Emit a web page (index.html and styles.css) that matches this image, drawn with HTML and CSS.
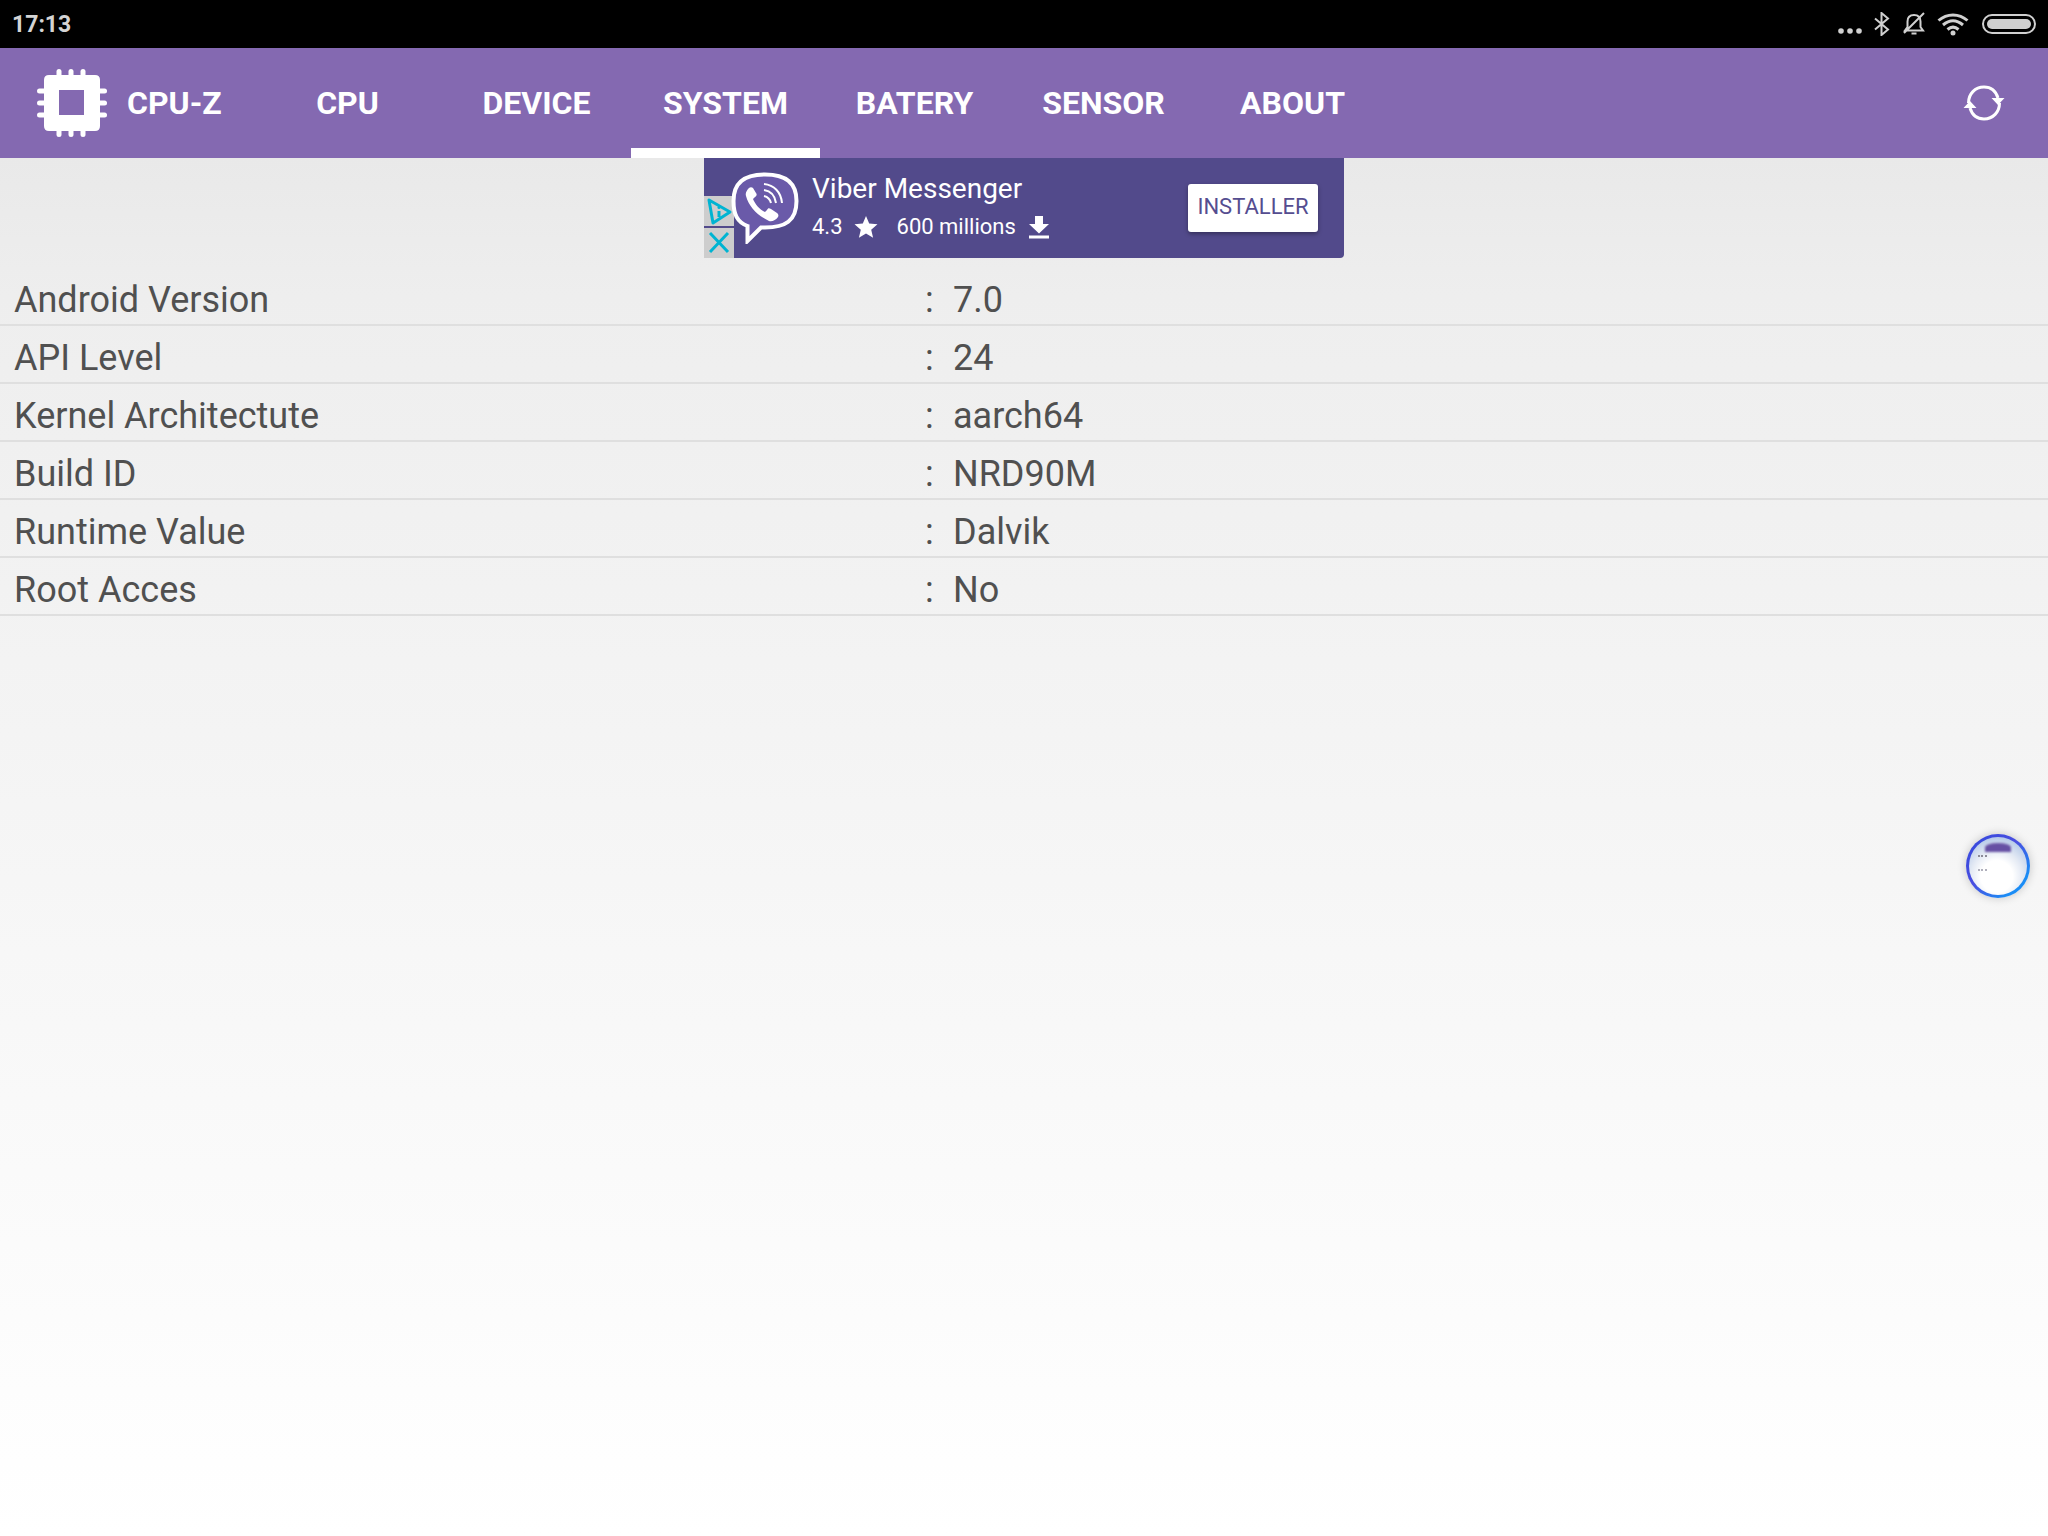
FILE: index.html
```html
<!DOCTYPE html>
<html lang="en">
<head>
    <meta charset="UTF-8">
    <title>CPU-Z</title>
    <link rel="stylesheet" href="styles.css">
</head>
<body>
    <div class="status-bar">
        <span class="clock">17:13</span>
        <div class="status-icons">
            <svg class="icon-dots" width="24" height="6" viewBox="0 0 24 6"><circle cx="3" cy="3" r="2.8"/><circle cx="12" cy="3" r="2.8"/><circle cx="21" cy="3" r="2.8"/></svg>
            <svg class="icon-bt" width="18" height="24" viewBox="0 0 18 24"><path d="M2 6.500 15 17.500 8.500 23V1L15 6.500 2 17.500"/></svg>
            <svg class="icon-bell" width="24" height="24" viewBox="0 0 24 24"><path d="M3 18.500H21L18.500 15V9.500C18.500 5.500 16 3 12 3S5.500 5.500 5.500 9.500V15ZM9.500 21.500H14.500M2 21 22 1"/></svg>
            <svg class="icon-wifi" width="32" height="24" viewBox="0 0 32 24"><path d="M1.500 8.500C10 1 22 1 30.500 8.500M6 13C12.500 7.500 19.500 7.500 26 13M10.500 17.500C14 14.500 18 14.500 21.500 17.500"/><circle cx="16" cy="21" r="2.500"/></svg>
            <div class="battery"><div class="battery-fill"></div></div>
        </div>
    </div>

    <header class="toolbar">
        <div class="brand">
            <svg class="chip" width="70" height="70" viewBox="0 0 70 70">
                <path fill-rule="evenodd" d="M12 7H58Q63 7 63 12V58Q63 63 58 63H12Q7 63 7 58V12Q7 7 12 7ZM22 22V47H47V22Z"/>
                <rect x="19.500" y="1" width="5" height="10" rx="2.500"/><rect x="31.500" y="1" width="5" height="10" rx="2.500"/><rect x="43.500" y="1" width="5" height="10" rx="2.500"/>
                <rect x="19.500" y="59" width="5" height="10" rx="2.500"/><rect x="31.500" y="59" width="5" height="10" rx="2.500"/><rect x="43.500" y="59" width="5" height="10" rx="2.500"/>
                <rect x="0" y="20.500" width="10" height="5" rx="2.500"/><rect x="0" y="32.500" width="10" height="5" rx="2.500"/><rect x="0" y="44.500" width="10" height="5" rx="2.500"/>
                <rect x="60" y="20.500" width="10" height="5" rx="2.500"/><rect x="60" y="32.500" width="10" height="5" rx="2.500"/><rect x="60" y="44.500" width="10" height="5" rx="2.500"/>
            </svg>
            <span class="brand-name">CPU-Z</span>
        </div>
        <nav class="tabs">
            <a class="tab">CPU</a>
            <a class="tab">DEVICE</a>
            <a class="tab active">SYSTEM</a>
            <a class="tab">BATERY</a>
            <a class="tab">SENSOR</a>
            <a class="tab">ABOUT</a>
        </nav>
        <svg class="refresh" width="44" height="40" viewBox="0 0 44 40">
            <path class="refresh-line" d="M6.500 20C6.500 11 13 4 22 4C29 4 34 8.500 36 15M37.500 20C37.500 29 31 36 22 36C15 36 10 31.500 8 25"/>
            <path class="refresh-head" d="M29.500 15H42.500L36 22ZM1.500 25H14.500L8 18Z"/>
        </svg>
    </header>

    <main class="content">
        <div class="ad">
            <div class="ad-choices">
                <div class="ad-box">
                    <svg width="30" height="31" viewBox="0 0 30 31"><path d="M5 4 26 16 9 27ZM15 15V21"/><circle cx="15" cy="11.500" r="1.500"/></svg>
                </div>
                <div class="ad-box">
                    <svg width="30" height="29" viewBox="0 0 30 29"><path d="M6 5 24 24M24 5 6 24"/></svg>
                </div>
            </div>
            <svg class="viber" width="68" height="72" viewBox="0 0 68 72">
                <path d="M34 2.500C54 2.500 65.500 10 65.500 29C65.500 49 54 55.500 34 55.500H30L16.500 69V54C6 50 2.500 42 2.500 29C2.500 10 14 2.500 34 2.500Z" fill="#6a5aa9" stroke="#fff" stroke-width="4"/>
                <path d="M18 16C16 18 14 21 15 24C18 35 27 44 38 49C41 50 45 48 47 45C48 43 47 42 46 41L40 37C38 36 37 36 36 38L34 40C29 38 24 32 22 27L24 25C26 24 26 22 25 21L22 16C21 15 19 15 18 16Z" fill="#fff"/>
                <path class="viber-waves" d="M33 12C43 13 50 20 51 31M33 18C40 19 44 24 45 31M33 24C37 25 39 27 40 31"/>
            </svg>
            <div class="ad-text">
                <div class="ad-title">Viber Messenger</div>
                <div class="ad-meta">
                    <span>4.3</span>
                    <svg class="star" width="24" height="24" viewBox="0 0 24 24"><path d="M12 1 15.200 8.600 23.500 9.300 17.200 14.700 19.100 22.800 12 18.500 4.900 22.800 6.800 14.700 0.500 9.300 8.800 8.600Z"/></svg>
                    <span class="ad-installs">600 millions</span>
                    <svg class="download" width="20" height="24" viewBox="0 0 20 24"><path d="M6 1H14V9H20L10 18.500 0 9H6ZM0 20.500H20V23.500H0Z"/></svg>
                </div>
            </div>
            <button class="ad-button">INSTALLER</button>
        </div>

        <div class="info-list">
            <div class="info-row"><span>Android Version</span><span>:</span><span>7.0</span></div>
            <div class="info-row"><span>API Level</span><span>:</span><span>24</span></div>
            <div class="info-row"><span>Kernel Architectute</span><span>:</span><span>aarch64</span></div>
            <div class="info-row"><span>Build ID</span><span>:</span><span>NRD90M</span></div>
            <div class="info-row"><span>Runtime Value</span><span>:</span><span>Dalvik</span></div>
            <div class="info-row"><span>Root Acces</span><span>:</span><span>No</span></div>
        </div>
    </main>

    <div class="bubble">
        <div class="bubble-inner">
            <div class="bubble-cap"></div>
            <div class="bubble-lines"></div>
        </div>
    </div>
</body>
</html>
```

FILE: styles.css
```css
* {
    box-sizing: border-box;
}
body {
    margin: 0;
    height: 100vh;
    display: flex;
    flex-direction: column;
    font-family: Roboto, "Liberation Sans", sans-serif;
    overflow: hidden;
}

/* status bar */
.status-bar {
    height: 48px;
    flex: none;
    background-color: #000;
    color: #d4d4d4;
    display: flex;
    align-items: center;
    justify-content: space-between;
    padding: 0 12px 0 12px;
}
.clock {
    font-size: 23px;
    font-weight: 700;
}
.status-icons {
    display: flex;
    align-items: center;
    gap: 11px;
}
.status-icons svg {
    fill: #d0d0d0;
}
.icon-dots {
    margin-top: 14px;
}
.icon-bt path, .icon-bell path {
    fill: none;
    stroke: #d0d0d0;
    stroke-width: 2;
}
.icon-wifi path {
    fill: none;
    stroke: #d0d0d0;
    stroke-width: 3;
}
.battery {
    width: 54px;
    height: 20px;
    margin-left: 2px;
    border: 2px solid #d0d0d0;
    border-radius: 10px;
    padding: 3px;
}
.battery-fill {
    height: 100%;
    background-color: #d0d0d0;
    border-radius: 5px;
}

/* toolbar */
.toolbar {
    height: 110px;
    flex: none;
    background-color: #8469b1;
    color: #fff;
    display: flex;
    align-items: center;
}
.brand {
    width: 253px;
    flex: none;
    padding-left: 37px;
    display: flex;
    align-items: center;
    gap: 20px;
}
.chip {
    fill: #fff;
}
.brand-name {
    font-size: 32px;
    font-weight: 700;
}
.tabs {
    display: flex;
    height: 100%;
}
.tab {
    width: 189px;
    display: flex;
    align-items: center;
    justify-content: center;
    font-size: 32px;
    font-weight: 700;
}
.tab.active {
    box-shadow: inset 0 -10px 0 #fff;
}
.refresh {
    margin-left: auto;
    margin-right: 42px;
}
.refresh-line {
    fill: none;
    stroke: #fff;
    stroke-width: 3;
}
.refresh-head {
    fill: #fff;
}

/* content */
.content {
    flex: 1;
    background: linear-gradient(#e9e9e9, #eeeeee 10%, #fff);
}
.ad {
    width: 640px;
    height: 100px;
    margin: 0 auto 10px;
    background-color: #524a8b;
    border-radius: 0 0 4px 0;
    color: #fff;
    display: flex;
    align-items: center;
}
.ad-choices {
    width: 30px;
    height: 100%;
    display: flex;
    flex-direction: column;
    justify-content: flex-end;
    gap: 2px;
}
.ad-box {
    height: 30px;
    background-color: #cdcdcd;
    display: flex;
}
.ad-box svg {
    fill: #00b4d2;
    stroke: #00b4d2;
}
.ad-box path {
    fill: none;
    stroke-width: 3;
    stroke-linejoin: round;
}
.ad-box circle {
    stroke: none;
}
.viber {
    margin: 0 13px 0 -3px;
    flex: none;
}
.viber-waves {
    fill: none;
    stroke: #fff;
    stroke-width: 2;
}
.ad-text {
    flex: 1;
    padding-bottom: 2px;
}
.ad-title {
    font-size: 28px;
    line-height: 34px;
    margin-bottom: 6px;
}
.ad-meta {
    display: flex;
    align-items: center;
    font-size: 22px;
    line-height: 30px;
}
.star {
    fill: #fff;
    margin-left: 11px;
}
.ad-installs {
    margin-left: 19px;
}
.download {
    fill: #fff;
    margin-left: 13px;
}
.ad-button {
    width: 130px;
    height: 48px;
    margin-right: 26px;
    border: none;
    border-radius: 3px;
    background-color: #fff;
    color: #554d90;
    font-family: inherit;
    font-size: 22px;
    padding: 0 0 4px;
    box-shadow: 0 2px 4px rgba(0,0,0,0.35);
}
.info-row {
    height: 58px;
    display: grid;
    grid-template-columns: 911px 28px 1fr;
    align-items: center;
    padding: 8px 0 0 14px;
    border-bottom: 2px solid #dfdfdf;
    color: #505050;
    font-size: 36px;
}

/* floating assistive bubble */
.bubble {
    position: absolute;
    left: 1966px;
    top: 834px;
    width: 64px;
    height: 64px;
    padding: 3px;
    border-radius: 50%;
    background: linear-gradient(135deg, #3148dc, #4a4ee0 45%, #1a8cf5 80%);
    box-shadow: 0 0 10px rgba(0,0,0,0.2);
}
.bubble-inner {
    height: 100%;
    border-radius: 50%;
    background: radial-gradient(circle at 48% 68%, #fff 32%, #e4eaf4 52%, #b7cbe9 78%);
    overflow: hidden;
}
.bubble-cap {
    width: 26px;
    height: 9px;
    margin: 6px 0 0 16px;
    border-radius: 50% 50% 0 0;
    background-color: #6650a4;
    filter: blur(1px);
}
.bubble-lines {
    width: 9px;
    height: 16px;
    margin: 3px 0 0 9px;
    border-top: 2px dotted #8c8c98;
    border-bottom: 2px dotted #b0b0bc;
    filter: blur(0.5px);
}
```
